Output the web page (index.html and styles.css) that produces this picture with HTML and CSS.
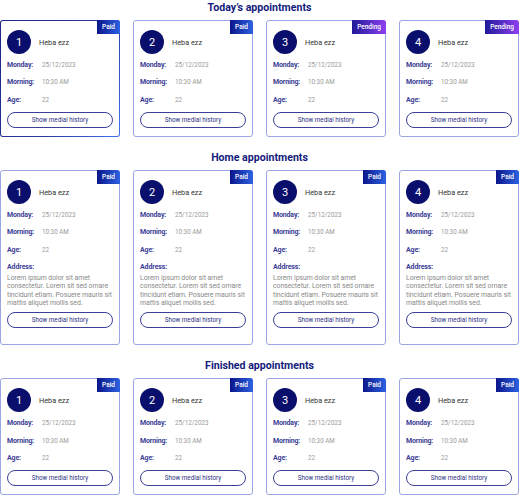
FILE: index.html
```html
<!DOCTYPE html>
<html>
<head>
<meta charset="utf-8">
<link rel="stylesheet" href="styles.css">
</head>
<body>
<section class="section">
  <h2 class="title">Today’s appointments</h2>
  <div class="grid">
    <div class="card card--active">
      <span class="badge badge--paid">Paid</span>
      <div class="head"><span class="num">1</span><span class="name">Heba ezz</span></div>
      <div class="row"><span class="lbl">Monday:</span><span class="val">25/12/2023</span></div>
      <div class="row"><span class="lbl">Morning:</span><span class="val">10:30 AM</span></div>
      <div class="row"><span class="lbl">Age:</span><span class="val">22</span></div>
      <button class="btn">Show medial history</button>
    </div>
    <div class="card">
      <span class="badge badge--paid">Paid</span>
      <div class="head"><span class="num">2</span><span class="name">Heba ezz</span></div>
      <div class="row"><span class="lbl">Monday:</span><span class="val">25/12/2023</span></div>
      <div class="row"><span class="lbl">Morning:</span><span class="val">10:30 AM</span></div>
      <div class="row"><span class="lbl">Age:</span><span class="val">22</span></div>
      <button class="btn">Show medial history</button>
    </div>
    <div class="card">
      <span class="badge badge--pending">Pending</span>
      <div class="head"><span class="num">3</span><span class="name">Heba ezz</span></div>
      <div class="row"><span class="lbl">Monday:</span><span class="val">25/12/2023</span></div>
      <div class="row"><span class="lbl">Morning:</span><span class="val">10:30 AM</span></div>
      <div class="row"><span class="lbl">Age:</span><span class="val">22</span></div>
      <button class="btn">Show medial history</button>
    </div>
    <div class="card">
      <span class="badge badge--pending">Pending</span>
      <div class="head"><span class="num">4</span><span class="name">Heba ezz</span></div>
      <div class="row"><span class="lbl">Monday:</span><span class="val">25/12/2023</span></div>
      <div class="row"><span class="lbl">Morning:</span><span class="val">10:30 AM</span></div>
      <div class="row"><span class="lbl">Age:</span><span class="val">22</span></div>
      <button class="btn">Show medial history</button>
    </div>
  </div>
</section>

<section class="section">
  <h2 class="title">Home appointments</h2>
  <div class="grid">
    <div class="card card--home">
      <span class="badge badge--paid">Paid</span>
      <div class="head"><span class="num">1</span><span class="name">Heba ezz</span></div>
      <div class="row"><span class="lbl">Monday:</span><span class="val">25/12/2023</span></div>
      <div class="row"><span class="lbl">Morning:</span><span class="val">10:30 AM</span></div>
      <div class="row"><span class="lbl">Age:</span><span class="val">22</span></div>
      <div class="addr-lbl">Address:</div>
      <p class="addr">Lorem ipsum dolor sit amet consectetur. Lorem sit sed ornare tincidunt etiam. Posuere mauris sit mattis aliquet mollis sed.</p>
      <button class="btn">Show medial history</button>
    </div>
    <div class="card card--home">
      <span class="badge badge--paid">Paid</span>
      <div class="head"><span class="num">2</span><span class="name">Heba ezz</span></div>
      <div class="row"><span class="lbl">Monday:</span><span class="val">25/12/2023</span></div>
      <div class="row"><span class="lbl">Morning:</span><span class="val">10:30 AM</span></div>
      <div class="row"><span class="lbl">Age:</span><span class="val">22</span></div>
      <div class="addr-lbl">Address:</div>
      <p class="addr">Lorem ipsum dolor sit amet consectetur. Lorem sit sed ornare tincidunt etiam. Posuere mauris sit mattis aliquet mollis sed.</p>
      <button class="btn">Show medial history</button>
    </div>
    <div class="card card--home">
      <span class="badge badge--paid">Paid</span>
      <div class="head"><span class="num">3</span><span class="name">Heba ezz</span></div>
      <div class="row"><span class="lbl">Monday:</span><span class="val">25/12/2023</span></div>
      <div class="row"><span class="lbl">Morning:</span><span class="val">10:30 AM</span></div>
      <div class="row"><span class="lbl">Age:</span><span class="val">22</span></div>
      <div class="addr-lbl">Address:</div>
      <p class="addr">Lorem ipsum dolor sit amet consectetur. Lorem sit sed ornare tincidunt etiam. Posuere mauris sit mattis aliquet mollis sed.</p>
      <button class="btn">Show medial history</button>
    </div>
    <div class="card card--home">
      <span class="badge badge--paid">Paid</span>
      <div class="head"><span class="num">4</span><span class="name">Heba ezz</span></div>
      <div class="row"><span class="lbl">Monday:</span><span class="val">25/12/2023</span></div>
      <div class="row"><span class="lbl">Morning:</span><span class="val">10:30 AM</span></div>
      <div class="row"><span class="lbl">Age:</span><span class="val">22</span></div>
      <div class="addr-lbl">Address:</div>
      <p class="addr">Lorem ipsum dolor sit amet consectetur. Lorem sit sed ornare tincidunt etiam. Posuere mauris sit mattis aliquet mollis sed.</p>
      <button class="btn">Show medial history</button>
    </div>
  </div>
</section>

<section class="section">
  <h2 class="title">Finished appointments</h2>
  <div class="grid">
    <div class="card">
      <span class="badge badge--paid">Paid</span>
      <div class="head"><span class="num">1</span><span class="name">Heba ezz</span></div>
      <div class="row"><span class="lbl">Monday:</span><span class="val">25/12/2023</span></div>
      <div class="row"><span class="lbl">Morning:</span><span class="val">10:30 AM</span></div>
      <div class="row"><span class="lbl">Age:</span><span class="val">22</span></div>
      <button class="btn">Show medial history</button>
    </div>
    <div class="card">
      <span class="badge badge--paid">Paid</span>
      <div class="head"><span class="num">2</span><span class="name">Heba ezz</span></div>
      <div class="row"><span class="lbl">Monday:</span><span class="val">25/12/2023</span></div>
      <div class="row"><span class="lbl">Morning:</span><span class="val">10:30 AM</span></div>
      <div class="row"><span class="lbl">Age:</span><span class="val">22</span></div>
      <button class="btn">Show medial history</button>
    </div>
    <div class="card">
      <span class="badge badge--paid">Paid</span>
      <div class="head"><span class="num">3</span><span class="name">Heba ezz</span></div>
      <div class="row"><span class="lbl">Monday:</span><span class="val">25/12/2023</span></div>
      <div class="row"><span class="lbl">Morning:</span><span class="val">10:30 AM</span></div>
      <div class="row"><span class="lbl">Age:</span><span class="val">22</span></div>
      <button class="btn">Show medial history</button>
    </div>
    <div class="card">
      <span class="badge badge--paid">Paid</span>
      <div class="head"><span class="num">4</span><span class="name">Heba ezz</span></div>
      <div class="row"><span class="lbl">Monday:</span><span class="val">25/12/2023</span></div>
      <div class="row"><span class="lbl">Morning:</span><span class="val">10:30 AM</span></div>
      <div class="row"><span class="lbl">Age:</span><span class="val">22</span></div>
      <button class="btn">Show medial history</button>
    </div>
  </div>
</section>
</body>
</html>
```

FILE: styles.css
```css
* { box-sizing: border-box; }
html, body { margin: 0; padding: 0; background: #fff; }
body {
  font-family: Roboto, "Liberation Sans", sans-serif;
  width: 519px;
  padding-top: 1px;
}
.section { margin-bottom: 14px; }
.title {
  margin: 0 0 6px;
  text-align: center;
  font-size: 10.6px;
  line-height: 13px;
  font-weight: 700;
  color: #141a7c;
}
.grid {
  display: grid;
  grid-template-columns: repeat(4, 1fr);
  column-gap: 13px;
}
.card {
  position: relative;
  border: 1px solid #9aa6e4;
  border-radius: 3px;
  padding: 9px 6px 8px;
  display: flex;
  flex-direction: column;
  background: #fff;
}
.card--active {
  border: 1.5px solid transparent;
  background:
    linear-gradient(#fff, #fff) padding-box,
    linear-gradient(120deg, #1c2488 0%, #2a3a9e 60%, #3f74ee 100%) border-box;
}
.card--home { padding-bottom: 16px; }
.badge {
  position: absolute;
  top: -1px;
  right: -1px;
  height: 14px;
  line-height: 14px;
  padding: 0 5px;
  font-size: 6.5px;
  font-weight: 500;
  color: #fff;
  border-top-right-radius: 3px;
}
.badge--paid { background: linear-gradient(90deg, #0b168a, #2d62e2); }
.badge--pending { background: linear-gradient(90deg, #1f1a98, #8e3ff0); padding: 0 5px; }
.head {
  display: flex;
  align-items: center;
  height: 24px;
}
.num {
  width: 24px;
  height: 24px;
  border-radius: 50%;
  background: #0a0e6c;
  color: #fff;
  font-size: 11px;
  display: flex;
  align-items: center;
  justify-content: center;
  flex: none;
}
.name {
  margin-left: 8px;
  font-size: 7.3px;
  color: #333;
}
.row {
  display: flex;
  align-items: center;
  height: 17.5px;
}
.head + .row { margin-top: 2px; }
.lbl {
  width: 35px;
  font-size: 7px;
  font-weight: 700;
  color: #3b4096;
  letter-spacing: -0.15px;
}
.val {
  font-size: 6.3px;
  color: #9a9a9a;
}
.addr-lbl {
  margin-top: 1px;
  height: 14px;
  line-height: 14px;
  font-size: 7px;
  font-weight: 700;
  color: #3b4096;
  letter-spacing: -0.1px;
}
.addr {
  margin: 0;
  font-size: 6.9px;
  line-height: 8.6px;
  color: #8a8a8a;
  letter-spacing: -0.05px;
}
.btn {
  margin-top: 3.5px;
  height: 16px;
  width: 100%;
  border: 1px solid #3b4096;
  border-radius: 9px;
  background: #fff;
  color: #2c3180;
  font-family: Roboto, "Liberation Sans", sans-serif;
  font-size: 6.3px;
  padding: 0;
}
.addr + .btn { margin-top: 4.5px; }
```
